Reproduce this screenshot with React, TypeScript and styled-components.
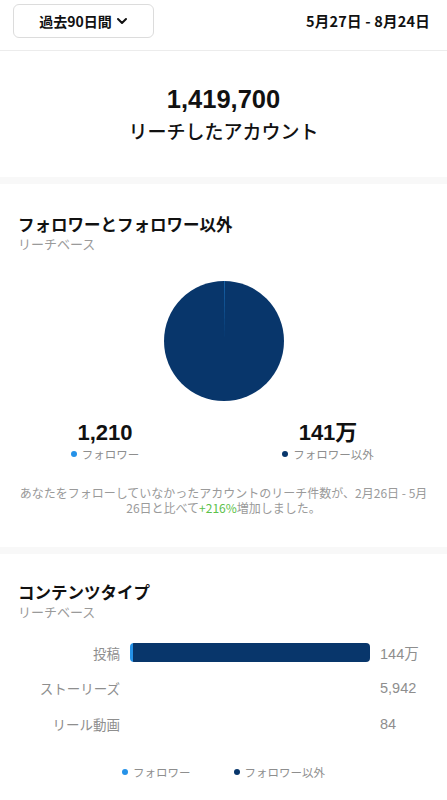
import React from 'react';
import styled, { createGlobalStyle } from 'styled-components';

const GlobalStyle = createGlobalStyle`
    body {
        margin: 0;
        background: #ffffff;
        font-family: "Noto Sans CJK JP", "Liberation Sans", sans-serif;
        color: #111;
    }
`;

const NAVY = '#08366b';
const LIGHT = '#2592e8';

const Page = styled.div`
    width: 447px;
    display: flex;
    flex-direction: column;
`;

const TopBar = styled.div`
    height: 51px;
    padding: 0 17px 0 13px;
    display: flex;
    align-items: flex-start;
    justify-content: space-between;
    border-bottom: 1px solid #ececec;
    box-sizing: border-box;
`;

const RangeButton = styled.button`
    margin-top: 4px;
    width: 141px;
    height: 34px;
    border: 1px solid #dcdcdc;
    border-radius: 6px;
    background: #fff;
    display: flex;
    align-items: center;
    justify-content: center;
    gap: 4px;
    font-family: inherit;
    font-size: 14px;
    font-weight: 700;
    color: #111;
    padding: 0;
`;

const DateRange = styled.div`
    margin-top: 10px;
    font-size: 14.5px;
    font-weight: 700;
    letter-spacing: 0.2px;
`;

const Hero = styled.section`
    height: 126px;
    display: flex;
    flex-direction: column;
    align-items: center;
    padding-top: 33px;
    box-sizing: border-box;
`;

const HeroNumber = styled.div`
    font-family: "Liberation Sans", "Noto Sans CJK JP", sans-serif;
    font-size: 25.5px;
    font-weight: 700;
    line-height: 30px;
`;

const HeroLabel = styled.div`
    font-size: 19px;
    font-weight: 500;
    line-height: 28px;
    margin-top: 3px;
`;

const Divider = styled.div`
    height: 7px;
    background: #f8f8f8;
`;

const Section = styled.section<{ $height: number; $top: number }>`
    height: ${p => p.$height}px;
    padding: ${p => p.$top}px 18px 0;
    box-sizing: border-box;
    display: flex;
    flex-direction: column;
`;

const Title = styled.h2`
    margin: 0;
    font-size: 16.5px;
    font-weight: 700;
    line-height: 22px;
`;

const Subtitle = styled.div`
    font-size: 13px;
    color: #9a9a9a;
    line-height: 18px;
`;

const PieWrap = styled.div`
    display: flex;
    justify-content: center;
    margin-top: 27px;
`;

const Totals = styled.div`
    display: grid;
    grid-template-columns: 223px 223px;
    justify-content: center;
    margin-top: 18px;
    padding-right: 14px;
`;

const Total = styled.div`
    display: flex;
    flex-direction: column;
    align-items: center;
`;

const TotalNumber = styled.div`
    font-family: "Liberation Sans", "Noto Sans CJK JP", sans-serif;
    font-size: 22px;
    font-weight: 700;
    line-height: 26px;
`;

const LegendItem = styled.span`
    display: inline-flex;
    align-items: center;
    gap: 5px;
    font-size: 11.5px;
    color: #8e8e8e;
    line-height: 16px;
`;

const Dot = styled.span<{ $color: string }>`
    width: 6px;
    height: 6px;
    border-radius: 50%;
    background: ${p => p.$color};
`;

const Note = styled.p`
    margin: 24px 0 0;
    font-size: 12px;
    line-height: 14.5px;
    color: #9a9a9a;
    text-align: center;
`;

const Up = styled.span`
    color: #5cc14a;
`;

const Rows = styled.div`
    display: flex;
    flex-direction: column;
    gap: 17px;
    margin-top: 21px;
`;

const Row = styled.div`
    display: grid;
    grid-template-columns: 102px 242px 1fr;
    column-gap: 8px;
    align-items: center;
    height: 19px;
`;

const RowLabel = styled.div`
    text-align: right;
    font-size: 13.5px;
    color: #8e8e8e;
`;

const Track = styled.div`
    height: 19px;
    display: flex;
    margin-left: 2px;
`;

const Bar = styled.div`
    height: 100%;
    display: flex;
    border-radius: 4px;
    overflow: hidden;
`;

const RowValue = styled.div`
    font-family: "Liberation Sans", "Noto Sans CJK JP", sans-serif;
    font-size: 14.5px;
    color: #8e8e8e;
    padding-left: 2px;
`;

const Legend = styled.div`
    display: flex;
    justify-content: center;
    gap: 43px;
    margin-top: 31px;
`;

const rows = [
    { label: '投稿', value: '144万', share: 1, follower: 0.012 },
    { label: 'ストーリーズ', value: '5,942', share: 0, follower: 0 },
    { label: 'リール動画', value: '84', share: 0, follower: 0 },
];

const Pie = () => (
    <svg width="122" height="122" viewBox="0 0 122 122">
        <circle cx="61" cy="61" r="60" fill={NAVY} />
        <path d="M61 61 L61 1 A60 60 0 0 1 61.6 1 Z" fill={LIGHT} opacity="0.8" />
    </svg>
);

export default function App() {
    return (
        <Page>
            <GlobalStyle />
            <TopBar>
                <RangeButton>
                    過去90日間
                    <svg width="12" height="12" viewBox="0 0 12 12">
                        <path d="M2 4 L6 8 L10 4" fill="none" stroke="#111" strokeWidth="2" strokeLinecap="round" strokeLinejoin="round" />
                    </svg>
                </RangeButton>
                <DateRange>5月27日 - 8月24日</DateRange>
            </TopBar>

            <Hero>
                <HeroNumber>1,419,700</HeroNumber>
                <HeroLabel>リーチしたアカウント</HeroLabel>
            </Hero>

            <Divider />

            <Section $height={363} $top={29}>
                <Title>フォロワーとフォロワー以外</Title>
                <Subtitle>リーチベース</Subtitle>
                <PieWrap>
                    <Pie />
                </PieWrap>
                <Totals>
                    <Total>
                        <TotalNumber>1,210</TotalNumber>
                        <LegendItem><Dot $color={LIGHT} />フォロワー</LegendItem>
                    </Total>
                    <Total>
                        <TotalNumber>141万</TotalNumber>
                        <LegendItem><Dot $color={NAVY} />フォロワー以外</LegendItem>
                    </Total>
                </Totals>
                <Note>
                    あなたをフォローしていなかったアカウントのリーチ件数が、2月26日 - 5月26日と比べて<Up>+216%</Up>増加しました。
                </Note>
            </Section>

            <Divider />

            <Section $height={249} $top={27}>
                <Title>コンテンツタイプ</Title>
                <Subtitle>リーチベース</Subtitle>
                <Rows>
                    {rows.map(r => (
                        <Row key={r.label}>
                            <RowLabel>{r.label}</RowLabel>
                            <Track>
                                {r.share > 0 && (
                                    <Bar style={{ width: `${r.share * 100}%` }}>
                                        <div style={{ width: `${r.follower * 100}%`, background: LIGHT }} />
                                        <div style={{ flex: 1, background: NAVY }} />
                                    </Bar>
                                )}
                            </Track>
                            <RowValue>{r.value}</RowValue>
                        </Row>
                    ))}
                </Rows>
                <Legend>
                    <LegendItem><Dot $color={LIGHT} />フォロワー</LegendItem>
                    <LegendItem><Dot $color={NAVY} />フォロワー以外</LegendItem>
                </Legend>
            </Section>
        </Page>
    );
}
